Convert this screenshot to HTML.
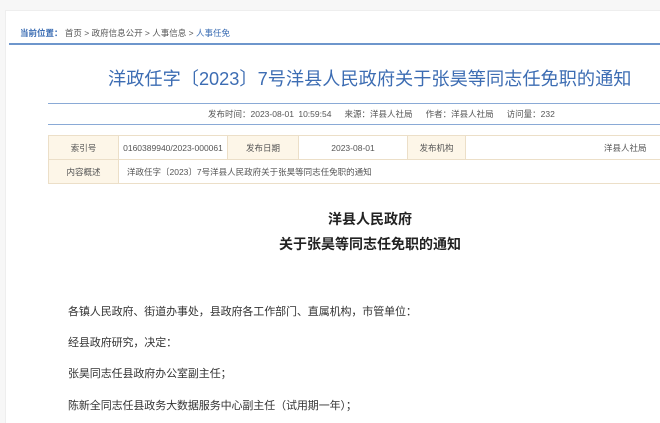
<!DOCTYPE html>
<html><head><meta charset="utf-8"><style>
*{margin:0;padding:0;box-sizing:border-box}
html,body{width:660px;height:423px;overflow:hidden}
body{background:#f7f7f7;font-family:"Liberation Sans","Noto Sans CJK SC",sans-serif;position:relative}
.card{position:absolute;left:5px;top:10px;width:700px;height:420px;background:#fff;border:1px solid #eee}
.a{position:absolute;white-space:nowrap}
.bc{left:20px;top:27px;font-size:8.5px;color:#555}
.bc b{color:#3a6cb3;font-weight:bold}
.bc .c{color:#3a6cb3}
.l1{left:9px;top:43px;width:660px;height:2px;background:#6e96cc}
.title{left:108px;top:65px;font-size:18.2px;color:#3d6db3}
.ln{left:48px;width:620px;height:1px;background:#8aaad6}
.meta{left:208px;top:108px;font-size:8.5px;color:#555;word-spacing:2px}
table{position:absolute;left:48px;top:135px;border-collapse:collapse;table-layout:fixed;width:625px;font-size:8.5px;color:#555}
td{border:1px solid #ecdfc8;height:24px;text-align:center;white-space:nowrap;overflow:hidden}
td.h{background:#fdf6e8}
.h1{font-weight:bold;font-size:14px;color:#222;left:0;width:740px;text-align:center}
.p{left:68px;font-size:11px;letter-spacing:-0.1px;color:#333}
</style></head><body>
<div class="card"></div>
<div class="a bc"><b>当前位置：</b> 首页 &gt; 政府信息公开 &gt; 人事信息 &gt; <span class="c">人事任免</span></div>
<div class="a l1"></div>
<div class="a title">洋政任字〔2023〕7号洋县人民政府关于张昊等同志任免职的通知</div>
<div class="a ln" style="top:103px"></div>
<div class="a meta">发布时间：2023-08-01 10:59:54 &nbsp; 来源：洋县人社局 &nbsp; 作者：洋县人社局 &nbsp; 访问量：232</div>
<div class="a ln" style="top:124px"></div>
<table>
<colgroup><col style="width:70px"><col style="width:109px"><col style="width:71px"><col style="width:109px"><col style="width:58px"><col style="width:208px"></colgroup>
<tr><td class="h">索引号</td><td>0160389940/2023-000061</td><td class="h">发布日期</td><td>2023-08-01</td><td class="h">发布机构</td><td style="text-align:left;padding-left:138px">洋县人社局</td></tr>
<tr><td class="h">内容概述</td><td colspan="5" style="text-align:left;padding-left:8px">洋政任字〔2023〕7号洋县人民政府关于张昊等同志任免职的通知</td></tr>
</table>
<div class="a h1" style="top:209px">洋县人民政府</div>
<div class="a h1" style="top:234px">关于张昊等同志任免职的通知</div>
<div class="a p" style="top:303px">各镇人民政府、街道办事处，县政府各工作部门、直属机构，市管单位：</div>
<div class="a p" style="top:334px">经县政府研究，决定：</div>
<div class="a p" style="top:365px">张昊同志任县政府办公室副主任；</div>
<div class="a p" style="top:397px">陈新全同志任县政务大数据服务中心副主任（试用期一年）；</div>
</body></html>
